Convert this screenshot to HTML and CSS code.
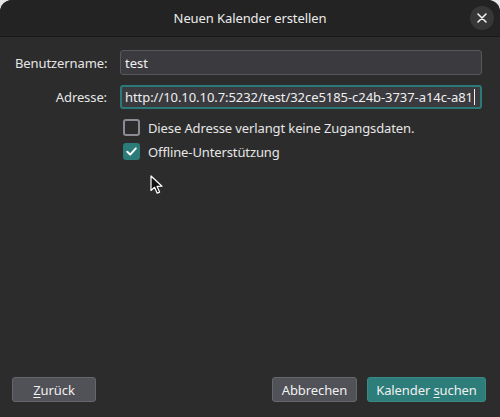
FILE: index.html
```html
<!DOCTYPE html>
<html lang="de">
<head>
<meta charset="utf-8">
<title>Neuen Kalender erstellen</title>
<link rel="stylesheet" href="styles.css">
</head>
<body>
<div class="dialog">
  <header class="titlebar">
    <span class="spacer"></span>
    <h1 class="title">Neuen Kalender erstellen</h1>
    <span class="close-wrap">
      <button class="close" aria-label="Schließen">
        <svg width="10" height="10" viewBox="0 0 10 10"><path d="M1 1 L9 9 M9 1 L1 9" stroke="#f2f2f2" stroke-width="1.6" stroke-linecap="round"/></svg>
      </button>
    </span>
  </header>

  <main class="content">
    <div class="form">
      <label class="label" for="user">Benutzername:</label>
      <input class="field" id="user" type="text" value="test">
      <label class="label" for="addr">Adresse:</label>
      <div class="field field-focus"><span class="field-text">http://10.10.10.7:5232/test/32ce5185-c24b-3737-a14c-a81</span><span class="caret"></span></div>
    </div>
    <div class="checks">
      <div class="check-row">
        <span class="box"></span>
        <span class="check-label">Diese Adresse verlangt keine Zugangsdaten.</span>
      </div>
      <div class="check-row">
        <span class="box box-on">
          <svg width="13" height="13" viewBox="0 0 13 13"><path d="M2.3 6.8 L5.2 9.6 L10.8 3.4" fill="none" stroke="#ffffff" stroke-width="2" stroke-linecap="round" stroke-linejoin="round"/></svg>
        </span>
        <span class="check-label">Offline-Unterstützung</span>
      </div>
    </div>
  </main>

  <footer class="footer">
    <button class="btn btn-back"><u>Z</u>urück</button>
    <div class="right">
      <button class="btn btn-cancel">Abbrechen</button>
      <button class="btn btn-primary">Kalender <u>s</u>uchen</button>
    </div>
  </footer>

  <svg class="cursor" width="14" height="20" viewBox="0 0 14 20">
    <path d="M1 1 L1 15.5 L4.6 12.3 L7.2 18.2 L9.6 17.1 L7.1 11.4 L12 11.2 Z" fill="#111" stroke="#fff" stroke-width="1.2" stroke-linejoin="round"/>
  </svg>
</div>
</body>
</html>
```

FILE: styles.css
```css
* { box-sizing: border-box; }

html, body {
  margin: 0;
  padding: 0;
  background: #e6e6e6;
}

body {
  font-family: "Noto Sans", "Open Sans", sans-serif;
  font-size: 13px;
  color: #e8e8e8;
}

.dialog {
  position: relative;
  width: 500px;
  height: 417px;
  background: #2c2c2c;
  border-radius: 12px 12px 0 0;
  overflow: hidden;
  display: flex;
  flex-direction: column;
}

.titlebar {
  height: 37px;
  background: #232323;
  border-bottom: 1px solid #181818;
  display: grid;
  grid-template-columns: 1fr auto 1fr;
  align-items: center;
}

.title {
  margin: 0;
  font-size: 13px;
  font-weight: normal;
  color: #ececec;
  letter-spacing: -0.1px;
}

.close-wrap {
  display: flex;
  justify-content: flex-end;
  padding-right: 6px;
}

.close {
  width: 24px;
  height: 24px;
  border-radius: 50%;
  border: none;
  background: #373737;
  padding: 0;
  display: flex;
  align-items: center;
  justify-content: center;
}

.content {
  padding: 13px 18px 0 15px;
}

.form {
  display: grid;
  grid-template-columns: 92px 1fr;
  column-gap: 13px;
  row-gap: 10px;
  align-items: center;
}

.label {
  text-align: right;
  color: #e6e6e6;
  white-space: nowrap;
  letter-spacing: -0.1px;
}

.field {
  height: 25px;
  background: #3a3a3f;
  border: 1px solid #56565c;
  border-radius: 3px;
  color: #f0f0f0;
  font-family: inherit;
  font-size: 13px;
  padding: 0 4px;
  outline: none;
  width: 362px;
}

.field-focus {
  height: 24px;
  border: 2px solid #2b7a77;
  display: flex;
  align-items: center;
  padding: 0 1px 0 3px;
  white-space: nowrap;
  overflow: hidden;
  letter-spacing: -0.06px;
}

.caret {
  display: inline-block;
  flex: none;
  width: 1px;
  height: 16px;
  background: #f0f0f0;
  margin-left: 1px;
}

.checks {
  padding-left: 108px;
  padding-top: 10px;
  display: flex;
  flex-direction: column;
  gap: 7px;
}

.check-row {
  display: flex;
  align-items: center;
  gap: 8px;
  height: 17px;
}

.check-label {
  color: #e6e6e6;
  letter-spacing: -0.12px;
}

.box {
  width: 17px;
  height: 17px;
  border: 2px solid #8b8b94;
  border-radius: 3px;
  display: flex;
  align-items: center;
  justify-content: center;
  flex: none;
}

.box-on {
  background: #2b7b78;
  border-color: #2b7b78;
}

.footer {
  margin-top: auto;
  padding: 0 14px 15px 12px;
  display: flex;
  justify-content: space-between;
  align-items: center;
}

.right {
  display: flex;
  gap: 10px;
}

.btn {
  height: 25px;
  border-radius: 3px;
  font-family: inherit;
  font-size: 13px;
  color: #f0f0f0;
  padding: 0;
  letter-spacing: -0.1px;
}

.btn u {
  text-underline-offset: 2px;
}

.btn-back,
.btn-cancel {
  background: #515158;
  border: 1px solid #66666d;
}

.btn-back { width: 84px; }
.btn-cancel { width: 85px; }

.btn-primary {
  width: 119px;
  background: #2d7d7a;
  border: 1px solid #3a8986;
}

.cursor {
  position: absolute;
  left: 150px;
  top: 175px;
}
```
